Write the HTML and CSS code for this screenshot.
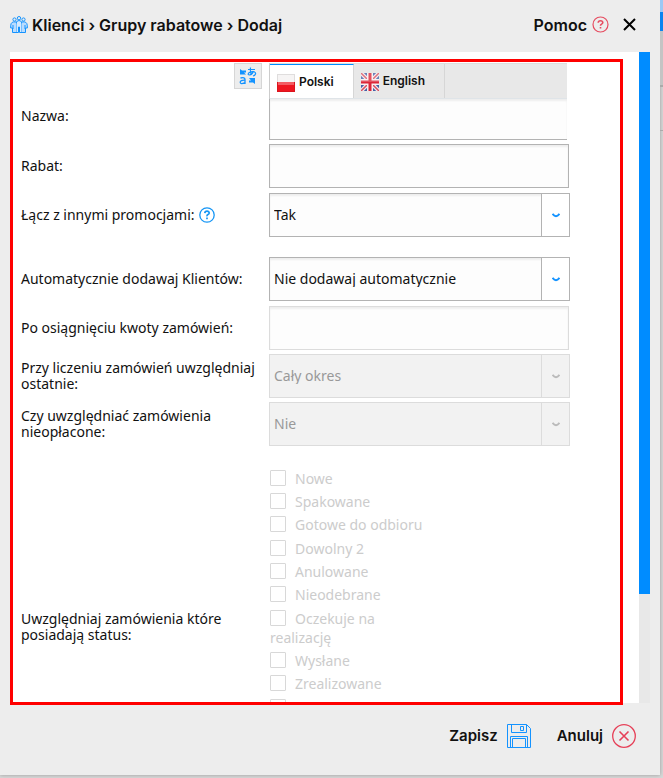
FILE: index.html
```html
<!DOCTYPE html>
<html lang="pl">
<head>
<meta charset="utf-8">
<title>Klienci › Grupy rabatowe › Dodaj</title>
<link rel="stylesheet" href="styles.css">
</head>
<body>
<main class="dialog">
  <header class="header">
    <svg class="clients-icon" width="18" height="18" viewBox="0 0 18 18" fill="none" stroke="#1493ff">
      <circle cx="4.500" cy="3.500" r="1.600"/><circle cx="9" cy="2.200" r="1.700"/><circle cx="13.500" cy="3.500" r="1.600"/>
      <path fill="#d5eaff" d="M6 16.500V8Q6 4.500 9 4.500T12 8V16.500H9.500V11H8.500V16.500Z"/>
      <path fill="#b9dcff" d="M6 6Q1 5 .7 9.500V12H2.500V16.500H6M12 6Q17 5 17.300 9.500V12H15.500V16.500H12M3 9V13M15 9V13"/>
    </svg>
    <h1 class="title">Klienci › Grupy rabatowe › Dodaj</h1>
    <a class="help" href="#">Pomoc
      <svg width="17" height="17" viewBox="0 0 17 17" fill="none" stroke="#e64c60"><circle cx="8.500" cy="8.500" r="7.500" stroke-width="1.200"/><path stroke-width="1.600" d="M6.200 6.800Q6.300 4.700 8.500 4.700T10.800 6.500Q10.800 7.500 9.600 8.100T8.500 9.800M8.500 11V12.600"/></svg>
    </a>
    <button class="close" type="button" aria-label="Zamknij">
      <svg width="13" height="13" viewBox="0 0 13 13" stroke="#000" stroke-width="2"><path d="M1 1L12 12M12 1L1 12"/></svg>
    </button>
  </header>

  <section class="body">
    <form class="form" id="group">
      <div class="row row-name">
        <label class="label" for="name">Nazwa:</label>
        <button class="translate" type="button" aria-label="Tłumacz">
          <svg width="18" height="18" viewBox="0 0 18 18" fill="none" stroke="#1493ff" stroke-width="1.300">
            <path fill="#1493ff" stroke="none" d="M1 2L3 3.500H7V5.500H5L7 7.500H1ZM10 11H16V17L14 15.500H10V13.500H12Z"/>
            <path d="M1.500 11Q6 9.800 6 12.500V17M6 13.200Q1.200 13 1.200 15.300T6 15.600"/>
            <path stroke-width="1.200" d="M9 2.500H16M11.500 .5Q11 5 12.500 8M14.500 4Q13.500 7.500 10.500 8Q8.500 8 9.500 6.200Q11.500 4 15 4.700Q17 5.500 16.500 7T14 9"/>
          </svg>
        </button>
        <div class="lang">
          <div class="tabs">
            <button class="tab tab-active" type="button">
              <svg width="18" height="18" viewBox="0 0 18 18"><path fill="#f2f0f0" d="M0 0H18V9H0Z"/><path fill="#ee1620" d="M0 8H18V18H0Z"/><path fill="none" stroke="#000" stroke-opacity=".08" d="M.5 .5H17.500V17.500H.5Z"/><path fill="#fff" fill-opacity=".3" d="M1 1H17V8H1ZM1 8H17V11H1Z"/></svg>
              Polski
            </button>
            <button class="tab" type="button">
              <svg width="18" height="18" viewBox="0 0 18 18"><path fill="#4560a5" d="M0 0H18V18H0Z"/><path stroke="#f3e9ed" stroke-width="4" d="M0 0L18 18M18 0L0 18"/><path stroke="#d94f5f" stroke-width="1.500" d="M0 0L18 18M18 0L0 18"/><path stroke="#f7eef0" stroke-width="6" d="M9 0V18M0 9H18"/><path stroke="#dc2638" stroke-width="3" d="M9 0V18M0 9H18"/><path fill="#fff" fill-opacity=".2" d="M0 0H18V9H0Z"/></svg>
              English
            </button>
          </div>
          <input class="input input-name" id="name" type="text">
        </div>
      </div>

      <div class="row row-spaced">
        <label class="label" for="discount">Rabat:</label>
        <input class="input" id="discount" type="text">
      </div>

      <div class="row row-group-end">
        <div class="label"><label for="combine">Łącz z innymi promocjami:</label>
          <svg class="hint" width="16" height="16" viewBox="0 0 16 16" fill="none" stroke="#1696f5"><circle cx="8" cy="8" r="7.200" stroke-width="1.300"/><path stroke-width="1.700" d="M5.800 6.200Q6 4.200 8 4.200T10.200 6Q10.200 7 9 7.600T8 9.300M8 10.500V12.200"/></svg>
        </div>
        <div class="select">
          <select id="combine"><option>Tak</option></select>
          <span class="arrow"><svg width="8" height="5" viewBox="0 0 8 5"><path d="M.5 .8Q4 5.600 7.500 .8"/></svg></span>
        </div>
      </div>

      <div class="row row-spaced">
        <label class="label" for="auto">Automatycznie dodawaj Klientów:</label>
        <div class="select">
          <select id="auto"><option>Nie dodawaj automatycznie</option></select>
          <span class="arrow"><svg width="8" height="5" viewBox="0 0 8 5"><path d="M.5 .8Q4 5.600 7.500 .8"/></svg></span>
        </div>
      </div>

      <div class="row">
        <label class="label" for="amount">Po osiągnięciu kwoty zamówień:</label>
        <input class="input" id="amount" type="text" disabled>
      </div>

      <div class="row">
        <label class="label" for="period">Przy liczeniu zamówień uwzględniaj ostatnie:</label>
        <div class="select">
          <select id="period" disabled><option>Cały okres</option></select>
          <span class="arrow"><svg width="8" height="5" viewBox="0 0 8 5"><path d="M.5 .8Q4 5.600 7.500 .8"/></svg></span>
        </div>
      </div>

      <div class="row">
        <label class="label" for="unpaid">Czy uwzględniać zamówienia nieopłacone:</label>
        <div class="select">
          <select id="unpaid" disabled><option>Nie</option></select>
          <span class="arrow"><svg width="8" height="5" viewBox="0 0 8 5"><path d="M.5 .8Q4 5.600 7.500 .8"/></svg></span>
        </div>
      </div>

      <div class="row row-status" role="group" aria-labelledby="status-label">
        <div class="label" id="status-label">Uwzględniaj zamówienia które posiadają status:</div>
        <ul class="checks">
          <li><label><input type="checkbox" disabled>Nowe</label></li>
          <li><label><input type="checkbox" disabled>Spakowane</label></li>
          <li><label><input type="checkbox" disabled>Gotowe do odbioru</label></li>
          <li><label><input type="checkbox" disabled>Dowolny 2</label></li>
          <li><label><input type="checkbox" disabled>Anulowane</label></li>
          <li><label><input type="checkbox" disabled>Nieodebrane</label></li>
          <li class="wrapped"><label><input type="checkbox" disabled>Oczekuje na realizację</label></li>
          <li><label><input type="checkbox" disabled>Wysłane</label></li>
          <li><label><input type="checkbox" disabled>Zrealizowane</label></li>
          <li><input type="checkbox" disabled aria-labelledby="status-label"></li>
        </ul>
      </div>
    </form>
    <div class="scrollbar"><div class="thumb"></div></div>
    <div class="frame"></div>
  </section>

  <footer class="footer">
    <button class="action" type="submit" form="group">Zapisz
      <svg width="24" height="24" viewBox="0 0 24 24" fill="none" stroke="#1493ff"><path d="M.5 .5H19.500L23.500 4.500V23.500H.5ZM4.500 .5V8.500H19.500V.5M13.500 2.500H16.500V6.500H13.500ZM3.500 23.500V12.500H20.500V23.500M5.500 23.500V14.500H18.500V23.500"/></svg>
    </button>
    <button class="action" type="button">Anuluj
      <svg width="24" height="24" viewBox="0 0 24 24" fill="none" stroke="#e64058" stroke-width="1.300"><circle cx="12" cy="12" r="11.300"/><path stroke-width="1.600" d="M7.500 7.500L16.500 16.500M16.500 7.500L7.500 16.500"/></svg>
    </button>
  </footer>
</main>
<div class="page-edge"><span class="edge-top"></span><span class="edge-blue"></span><span class="edge-dark"></span><span class="edge-light"></span></div>
</body>
</html>
```
FILE: styles.css
```css
* { box-sizing: border-box; }

body {
  margin: 0;
  display: flex;
  height: 100vh;
  overflow: hidden;
  background: #d8d8d8;
  color: #111;
  font: 14px/16px "Noto Sans", sans-serif;
}

button, input, select { font: inherit; color: inherit; }
button { background: none; border: 0; padding: 0; }
svg { display: block; flex: none; }

.dialog {
  flex: 1;
  min-width: 0;
  display: flex;
  flex-direction: column;
  margin-bottom: 3px;
  background: #ededed;
  box-shadow: 0 0 4px #999;
}

.header {
  flex: none;
  display: flex;
  align-items: center;
  height: 52px;
  padding: 0 24px 3px 10px;
  font: 600 16px/20px Inter, sans-serif;
}
.title { margin: 0 auto 0 4px; font: inherit; }
.help { display: flex; align-items: center; gap: 5px; color: inherit; text-decoration: none; }
.close { margin-left: 14px; }

.body {
  position: relative;
  flex: 1;
  min-height: 0;
  display: flex;
  margin: 0 10px;
  background: #fff;
}
.form {
  flex: 1;
  min-width: 0;
  display: flex;
  flex-direction: column;
  gap: 4px;
  overflow: hidden;
  padding: 11px 16px 0 11px;
}
.frame {
  position: absolute;
  inset: 7px 27px -2px 0;
  border: 3px solid #f00;
  pointer-events: none;
}
.scrollbar { width: 11px; background: #e8e8e8; }
.thumb { height: 83.3%; background: #008cff; }

.row {
  flex: none;
  display: grid;
  grid-template-columns: 248px 301px;
  align-items: center;
}
.row-name { grid-template-columns: 213px 35px 298px; align-items: start; }
.row-name .label { padding-top: 45px; }
.row-spaced { padding-bottom: 1px; }
.row-group-end { padding-bottom: 16px; }
.label { display: flex; align-items: center; gap: 4px; padding-right: 8px; }

.translate {
  display: grid;
  place-items: center;
  width: 28px;
  height: 26px;
  border: 1px solid #d6d6d6;
  background: #ededed;
}
.tabs { display: flex; height: 35px; background: #e8e8e8; border-top: 1px solid #ddd; border-left: 1px solid #ccc; }
.tab {
  display: flex;
  align-items: center;
  gap: 4px;
  padding: 0 19px 0 7px;
  border-right: 1px solid #d6d6d6;
  font: 600 12px/16px Inter, sans-serif;
}
.tab svg { margin-top: 2px; }
.tab-active { background: #fff; border-top: 1px solid #008cff; }

.input {
  display: block;
  width: 300px;
  height: 44px;
  padding: 0 4px;
  border: 1px solid #b3b3b3;
  background: #fdfdfd;
  box-shadow: inset 0 2px 2px #eee;
}
.input:disabled { border-color: #dcdcdc; }
.input-name { width: 100%; height: 42px; border-top-color: #dfe4e8; border-right: 0; }

.select { position: relative; }
.select select {
  display: block;
  appearance: none;
  width: 100%;
  height: 44px;
  padding: 0 32px 0 4px;
  border: 1px solid #b3b3b3;
  border-radius: 0;
  background: #fdfdfd;
  box-shadow: inset 0 2px 2px #eee;
}
.arrow {
  position: absolute;
  inset: 1px 1px 1px auto;
  width: 28px;
  display: grid;
  place-items: center;
  border-left: 1px solid #b3b3b3;
  background: #fff;
  pointer-events: none;
}
.arrow path { fill: none; stroke: #1493ff; stroke-width: 2; }
.select select:disabled { border-color: #dcdcdc; background: #f2f2f2; box-shadow: none; color: #999; opacity: 1; }
select:disabled + .arrow { border-color: #dcdcdc; background: #f2f2f2; }
select:disabled + .arrow path { stroke: #bbb; }

.row-status { height: 354px; }
.checks {
  align-self: start;
  width: 160px;
  margin: 0;
  padding: 19px 0 0 1px;
  list-style: none;
  color: #ccc;
}
.checks li { height: 23px; line-height: 19px; }
.checks li:nth-child(3n) { height: 24px; }
.checks .wrapped { height: 42px; }
.checks input {
  appearance: none;
  width: 16px;
  height: 16px;
  margin: 0 9px 0 0;
  border: 1px solid #d8d8d8;
  border-radius: 1px;
  background: #fff;
  vertical-align: -2px;
}

.footer {
  flex: none;
  display: flex;
  justify-content: flex-end;
  align-items: center;
  gap: 26px;
  height: 72px;
  padding: 0 24px 6px 0;
}
.action { display: flex; align-items: center; gap: 9px; font: 600 15px/20px Inter, sans-serif; }

.page-edge { width: 3px; display: flex; flex-direction: column; }
.edge-top { height: 12px; background: #9cc8f5; }
.edge-blue { height: 19px; background: #0a84f0; }
.edge-dark { height: 56px; background: #c4c4c4; border-bottom: 2px solid #aaa; }
.edge-light { height: 44px; border-bottom: 1px solid #aaa; }
```
